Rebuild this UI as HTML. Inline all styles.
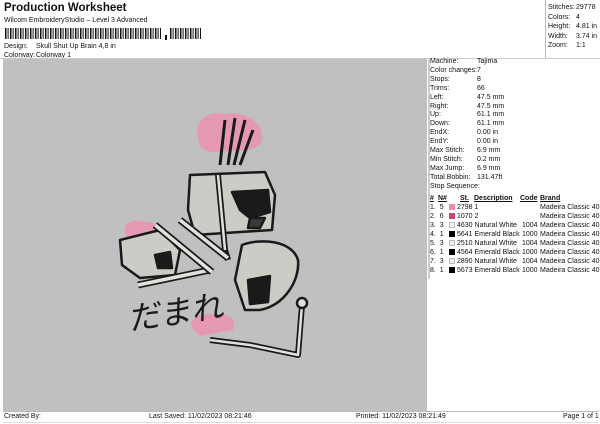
<!DOCTYPE html>
<html><head><meta charset="utf-8"><style>
body{margin:0;width:600px;height:424px;background:#fff;font-family:"Liberation Sans",Arial,sans-serif;color:#111;position:relative;overflow:hidden}
div{position:absolute;white-space:nowrap}
.s{font-size:7px}
</style></head><body>
<div style="left:4px;top:2px;font-size:11.5px;font-weight:bold">Production Worksheet</div>
<div class="s" style="left:4px;top:17px">Wilcom EmbroideryStudio – Level 3 Advanced</div>
<svg style="position:absolute;left:5px;top:28px" width="196" height="13">
<defs><pattern id="bc" width="5" height="11" patternUnits="userSpaceOnUse"><rect x="0" width="1.5" height="11" fill="#111"/><rect x="2.6" width="1" height="11" fill="#111"/></pattern></defs>
<rect x="0" y="0" width="156" height="11" fill="url(#bc)"/>
<rect x="160" y="7" width="2" height="5" fill="#111"/>
<rect x="165" y="0" width="35" height="11" fill="url(#bc)"/>
</svg>
<div class="s" style="left:4px;top:43px">Design:</div><div class="s" style="left:36px;top:43px">Skull Shut Up Brain 4,8 in</div>
<div class="s" style="left:4px;top:52px">Colorway:</div><div class="s" style="left:36px;top:52px">Colorway 1</div>
<div style="left:545px;top:0;width:1px;height:58px;background:#bbb"></div>
<div style="left:0;top:58px;width:600px;height:1px;background:#ccc"></div>
<div class="s" style="left:548px;top:3px;line-height:9.6px">Stitches:<br>Colors:<br>Height:<br>Width:<br>Zoom:</div>
<div class="s" style="left:576px;top:3px;line-height:9.6px">29778<br>4<br>4.81 in<br>3.74 in<br>1:1</div>
<div style="left:3px;top:59px;width:424px;height:352px;background:#c0c0c0"></div>
<div style="left:428px;top:59px;width:2px;height:220px;background:#ccc"></div>
<div class="s" style="left:430px;top:58px;line-height:8.9px">Machine:<br>Color changes:<br>Stops:<br>Trims:<br>Left:<br>Right:<br>Up:<br>Down:<br>EndX:<br>EndY:<br>Max Stitch:<br>Min Stitch:<br>Max Jump:<br>Total Bobbin:<br>Stop Sequence:</div>
<div class="s" style="left:477px;top:58px;line-height:8.9px">Tajima<br>7<br>8<br>66<br>47.5 mm<br>47.5 mm<br>61.1 mm<br>61.1 mm<br>0.00 in<br>0.00 in<br>6.9 mm<br>0.2 mm<br>6.9 mm<br>131.47ft</div>
<div class="s" style="left:430px;top:195px;font-weight:bold;text-decoration:underline">#</div>
<div class="s" style="left:438px;top:195px;font-weight:bold;text-decoration:underline">N#</div>
<div class="s" style="left:460px;top:195px;font-weight:bold;text-decoration:underline">St.</div>
<div class="s" style="left:474px;top:195px;font-weight:bold;text-decoration:underline">Description</div>
<div class="s" style="left:520px;top:195px;font-weight:bold;text-decoration:underline">Code</div>
<div class="s" style="left:540px;top:195px;font-weight:bold;text-decoration:underline">Brand</div>
<div class="s" style="left:430px;top:203px;line-height:9px">1.&nbsp; 5<br>2.&nbsp; 6<br>3.&nbsp; 3<br>4.&nbsp; 1<br>5.&nbsp; 3<br>6.&nbsp; 1<br>7.&nbsp; 3<br>8.&nbsp; 1</div>
<div style="left:449px;top:204px;width:6px;height:6px;background:#f08ab0"></div>
<div style="left:449px;top:213px;width:6px;height:6px;background:#d0407a"></div>
<div style="left:449px;top:222px;width:6px;height:6px;background:#eee;box-shadow:inset 0 0 0 1px #bbb"></div>
<div style="left:449px;top:231px;width:6px;height:6px;background:#000"></div>
<div style="left:449px;top:240px;width:6px;height:6px;background:#eee;box-shadow:inset 0 0 0 1px #bbb"></div>
<div style="left:449px;top:249px;width:6px;height:6px;background:#000"></div>
<div style="left:449px;top:258px;width:6px;height:6px;background:#eee;box-shadow:inset 0 0 0 1px #bbb"></div>
<div style="left:449px;top:267px;width:6px;height:6px;background:#000"></div>
<div class="s" style="left:457px;top:203px;line-height:9px">2798 1<br>1070 2<br>4630 Natural White<br>5641 Emerald Black<br>2510 Natural White<br>4564 Emerald Black<br>2890 Natural White<br>5673 Emerald Black</div>
<div class="s" style="left:522px;top:203px;line-height:9px"><br><br>1004<br>1000<br>1004<br>1000<br>1004<br>1000</div>
<div class="s" style="left:540px;top:203px;line-height:9px">Madeira Classic 40<br>Madeira Classic 40<br>Madeira Classic 40<br>Madeira Classic 40<br>Madeira Classic 40<br>Madeira Classic 40<br>Madeira Classic 40<br>Madeira Classic 40</div>
<div style="left:3px;top:411px;width:596px;height:1px;background:#bbb"></div>
<div style="left:3px;top:422px;width:596px;height:1px;background:#ddd"></div>
<div class="s" style="left:4px;top:413px">Created By:</div>
<div class="s" style="left:149px;top:413px">Last Saved: 11/02/2023 08:21:46</div>
<div class="s" style="left:356px;top:413px">Printed: 11/02/2023 08:21:49</div>
<div class="s" style="left:563px;top:413px">Page 1 of 1</div>
<svg style="position:absolute;left:100px;top:100px" width="240" height="300" viewBox="0 0 240 300">
<g stroke="#1a1a1a" stroke-width="2.5" stroke-linejoin="round">
<path d="M98 40 C92 20 110 10 125 14 C140 10 165 20 162 40 C160 50 140 52 130 50 C115 55 100 52 98 40Z" fill="#e598b4" stroke="none"/>
<path d="M25 132 C22 122 35 118 45 122 C55 120 62 130 55 138 L28 142Z" fill="#e598b4" stroke="none"/>
<path d="M92 228 C88 216 105 212 118 215 C130 212 138 222 133 230 L100 236Z" fill="#e598b4" stroke="none"/>
<path d="M90 75 L165 72 L175 95 L172 130 L140 132 L95 135 L88 110Z" fill="#c9cdc5"/>
<path d="M132 92 L168 90 L170 112 L150 118 L140 110Z" fill="#1a1a1a"/>
<path d="M150 118 L165 118 L160 128 L148 128Z" fill="#3a3a3a"/>
<path d="M20 140 L60 130 L80 150 L75 175 L40 178 L22 165Z" fill="#c9cdc5"/>
<path d="M55 155 L70 152 L72 168 L58 168Z" fill="#1a1a1a"/>
<path d="M142 145 C160 138 192 140 198 160 C200 180 185 205 160 210 L145 210 L135 180Z" fill="#c9cdc5"/>
<path d="M148 180 L170 176 L168 202 L150 204Z" fill="#1a1a1a"/>
<path d="M118 75 L125 150 L128 160" fill="none" stroke-width="6"/>
<path d="M118 75 L125 150" fill="none" stroke="#e0e2dc" stroke-width="2.5"/>
<path d="M80 120 L128 158" fill="none" stroke-width="7"/>
<path d="M80 120 L128 158" fill="none" stroke="#e0e2dc" stroke-width="3.5"/>
<path d="M38 185 L110 170" fill="none" stroke-width="7"/>
<path d="M38 185 L110 170" fill="none" stroke="#e0e2dc" stroke-width="3.5"/>
<path d="M55 125 L112 172" fill="none" stroke-width="7"/>
<path d="M55 125 L112 172" fill="none" stroke="#e0e2dc" stroke-width="3.5"/>
<path d="M202 205 L198 255 L150 245 L110 240" fill="none" stroke-width="6"/>
<path d="M202 205 L198 255 L150 245 L110 240" fill="none" stroke="#e0e2dc" stroke-width="2.5"/>
<circle cx="202" cy="203" r="5" fill="#e0e2dc"/>
<path d="M125 20 L120 65 M135 18 L128 65 M145 20 L134 65 M153 30 L140 65" fill="none" stroke-width="3"/>
</g>
<text x="0" y="0" font-family="'Noto Sans CJK JP',sans-serif" font-size="32" fill="#1a1a1a" transform="translate(30,230) rotate(-8) skewX(-10)">だまれ</text>
</svg>
</body></html>
